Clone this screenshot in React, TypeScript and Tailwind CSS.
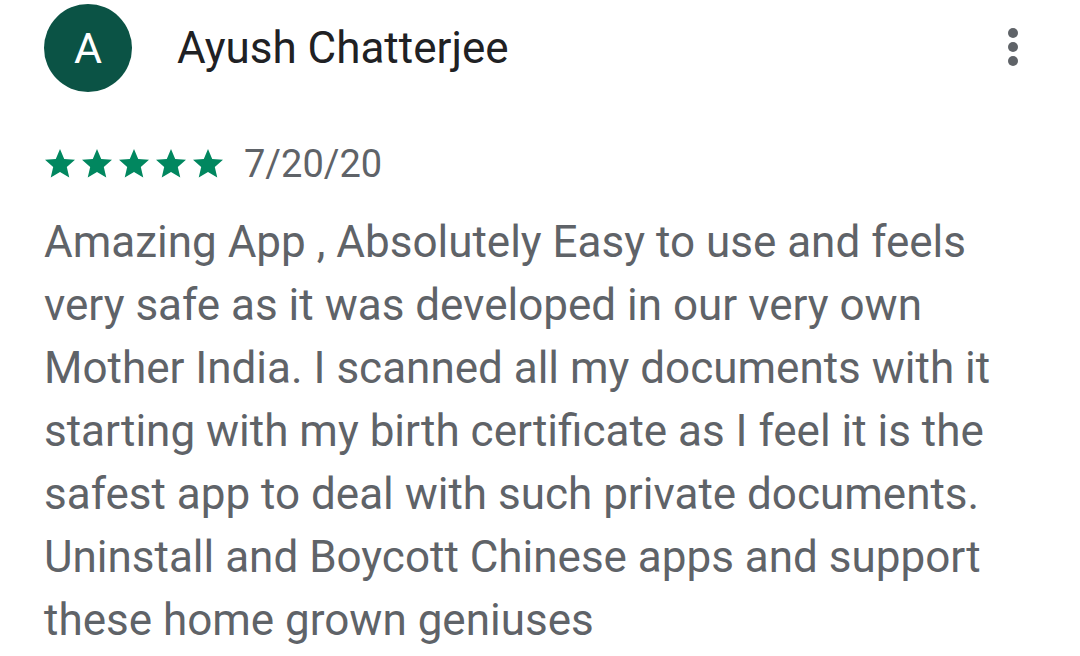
import React from "react";

const Star = () => (
  <svg width="36" height="36" viewBox="0 0 24 24" className="block">
    <path
      fill="#01875f"
      d="M12 17.27L18.18 21l-1.64-7.03L22 9.24l-7.19-.61L12 2 9.19 8.63 2 9.24l5.46 4.73L5.82 21z"
    />
  </svg>
);

export default function App() {
  const lines = [
    "Amazing App , Absolutely Easy to use and feels",
    "very safe as it was developed in our very own",
    "Mother India. I scanned all my documents with it",
    "starting with my birth certificate as I feel it is the",
    "safest app to deal with such private documents.",
    "Uninstall and Boycott Chinese apps and support",
    "these home grown geniuses",
  ];
  return (
    <div
      className="w-[1080px] h-[656px] bg-white overflow-hidden pl-[44px] pr-[62px]"
      style={{ fontFamily: "Roboto, 'Noto Sans', sans-serif" }}
    >
      <div className="flex items-center h-[94px] pt-[2px]">
        <div className="w-[88px] h-[88px] rounded-full bg-[#0b5345] flex items-center justify-center text-white text-[43px] leading-none">
          A
        </div>
        <div className="ml-[45px] text-[44px] text-[#202124] leading-none">Ayush Chatterjee</div>
        <div className="ml-auto flex flex-col gap-[4px] items-center -mt-[2px]">
          <span className="w-[10px] h-[10px] rounded-full bg-[#5f6368]" />
          <span className="w-[10px] h-[10px] rounded-full bg-[#5f6368]" />
          <span className="w-[10px] h-[10px] rounded-full bg-[#5f6368]" />
        </div>
      </div>
      <div className="flex items-center mt-[52px] h-[36px]">
        <div className="flex -ml-[2px] gap-[1px]">
          <Star />
          <Star />
          <Star />
          <Star />
          <Star />
        </div>
        <div className="ml-[18px] text-[38px] text-[#5f6368] leading-none">7/20/20</div>
      </div>
      <div className="mt-[29px] text-[44px] leading-[63px] text-[#5f6368]">
        {lines.map((l, i) => (
          <div key={i} className="whitespace-nowrap">{l}</div>
        ))}
      </div>
    </div>
  );
}
